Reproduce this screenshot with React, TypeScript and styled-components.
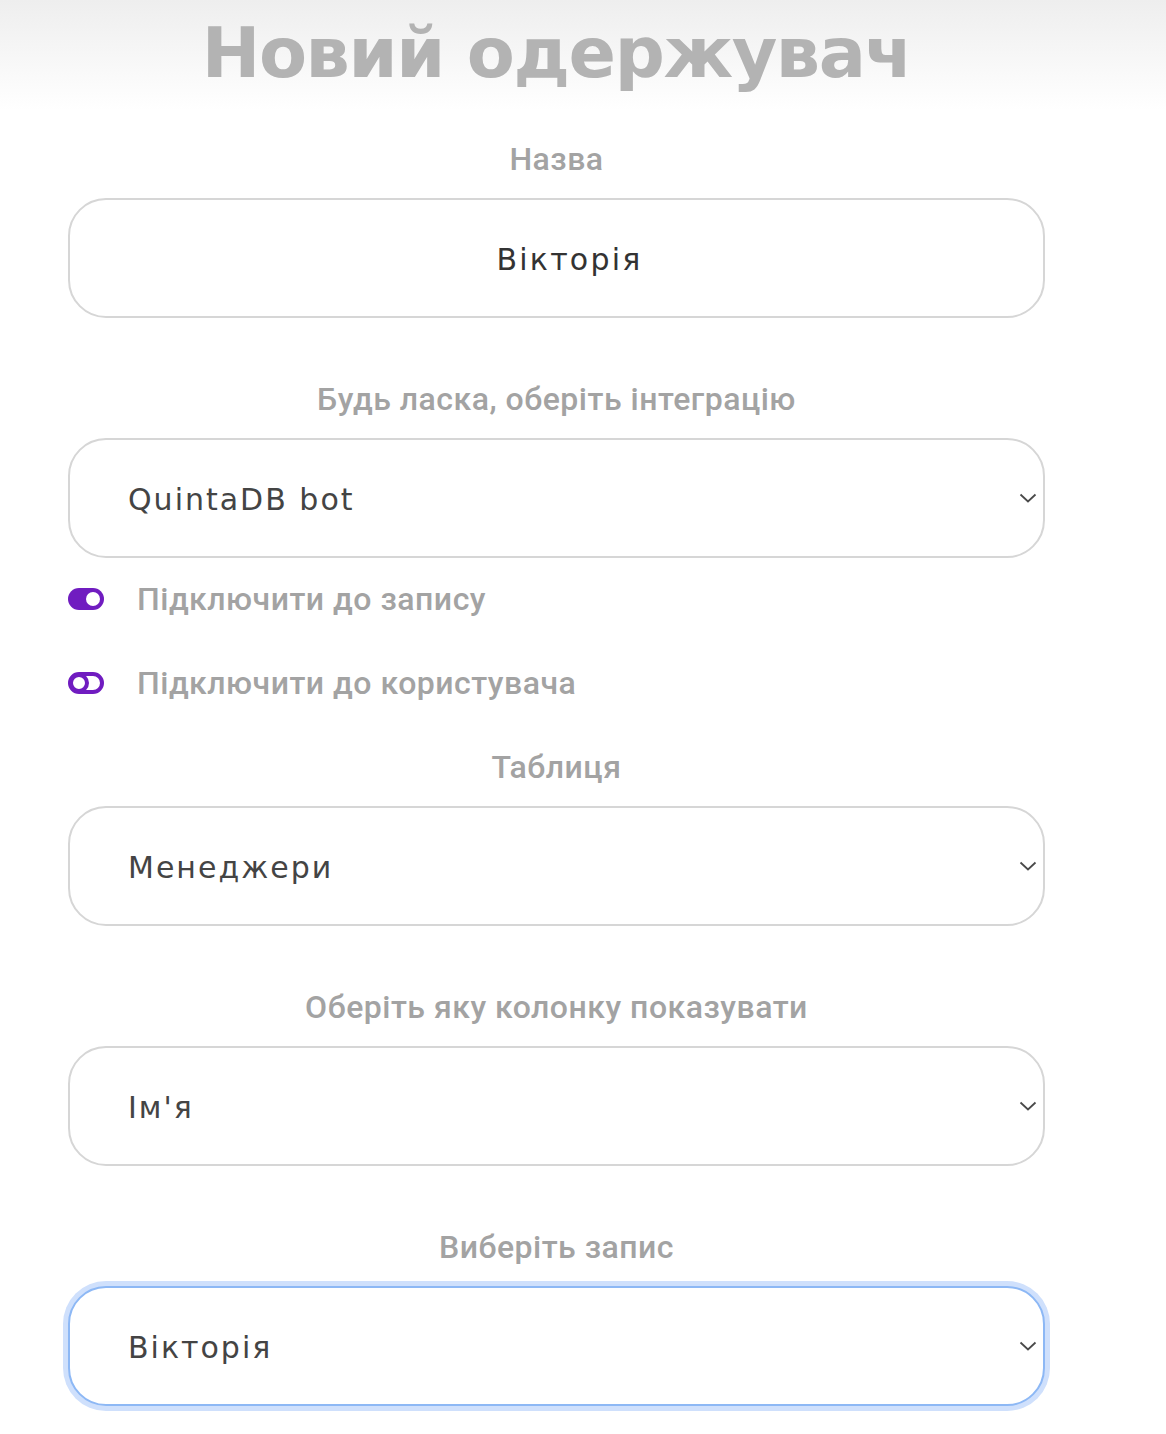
import React from "react";
import styled, { createGlobalStyle } from "styled-components";

const GlobalStyle = createGlobalStyle`
  html, body {
    margin: 0;
    padding: 0;
    background: #ffffff;
  }
  body {
    font-family: Roboto, "Noto Sans", sans-serif;
    background: linear-gradient(to bottom, #eeeeee 0px, #ffffff 110px) no-repeat;
  }
`;

const Page = styled.div`
  width: 1166px;
  min-height: 1434px;
  box-sizing: border-box;
  padding-left: 68px;
`;

const Column = styled.div`
  width: 977px;
  display: flex;
  flex-direction: column;
`;

const Title = styled.h1`
  margin: 0;
  height: 112px;
  line-height: 106px;
  text-align: center;
  font-family: "DejaVu Sans", Inter, sans-serif;
  font-weight: 700;
  font-size: 70px;
  letter-spacing: -1.4px;
  color: #b3b3b3;
`;

const Label = styled.label<{ $top?: number }>`
  display: block;
  margin-top: ${({ $top }) => $top ?? 0}px;
  height: 40px;
  line-height: 40px;
  text-align: center;
  font-family: Roboto, sans-serif;
  font-weight: 500;
  font-size: 32px;
  letter-spacing: 0.5px;
  color: #a3a3a3;
`;

const fieldBase = `
  box-sizing: border-box;
  width: 100%;
  height: 120px;
  border: 2px solid #d6d6d6;
  border-radius: 38px;
  background: #ffffff;
  font-family: "DejaVu Sans", "Noto Sans", sans-serif;
  font-size: 30px;
  outline: none;
`;

const TextInput = styled.input`
  ${fieldBase}
  margin-top: 19px;
  padding: 2px 30px 0 56px;
  text-align: center;
  color: #333333;
  font-weight: 400;
  letter-spacing: 2.2px;
`;

const SelectWrap = styled.div`
  position: relative;
  margin-top: 19px;
`;

const Select = styled.select<{ $focused?: boolean }>`
  ${fieldBase}
  appearance: none;
  -webkit-appearance: none;
  padding: 2px 80px 0 58px;
  color: #444444;
  font-weight: 400;
  letter-spacing: 2px;
  border-color: ${({ $focused }) => ($focused ? "#8db8f5" : "#d6d6d6")};
  box-shadow: ${({ $focused }) => ($focused ? "0 0 0 5px #cfe0fc" : "none")};
`;

const Chevron = styled.svg`
  position: absolute;
  right: 8px;
  top: 50%;
  width: 18px;
  height: 10px;
  margin-top: -5px;
  pointer-events: none;
`;

const ToggleRow = styled.div<{ $top: number }>`
  display: flex;
  align-items: center;
  gap: 33px;
  height: 40px;
  margin-top: ${({ $top }) => $top}px;
`;

const ToggleText = styled.span`
  font-family: Roboto, sans-serif;
  font-weight: 500;
  font-size: 32px;
  letter-spacing: 0.5px;
  color: #a3a3a3;
`;

const Toggle = ({ on }: { on: boolean }) => (
  <svg width="36" height="22" viewBox="0 0 36 22">
    {on ? (
      <>
        <rect x="0" y="0" width="36" height="22" rx="11" fill="#701cc0" />
        <circle cx="25" cy="11" r="7" fill="#ffffff" />
      </>
    ) : (
      <>
        <rect x="2" y="2" width="32" height="18" rx="9" fill="none" stroke="#701cc0" strokeWidth="4" />
        <circle cx="11" cy="11" r="8" fill="none" stroke="#701cc0" strokeWidth="4" />
      </>
    )}
  </svg>
);

const SelectField = ({ value, focused }: { value: string; focused?: boolean }) => (
  <SelectWrap>
    <Select $focused={focused} defaultValue={value}>
      <option>{value}</option>
    </Select>
    <Chevron viewBox="0 0 18 10">
      <path d="M1.5 1.5 L9 8.5 L16.5 1.5" fill="none" stroke="#4a4a4a" strokeWidth="1.8" />
    </Chevron>
  </SelectWrap>
);

export default function App() {
  return (
    <>
      <GlobalStyle />
      <Page>
        <Column>
          <Title>Новий одержувач</Title>
          <Label $top={27}>Назва</Label>
          <TextInput defaultValue="Вікторія" />

          <Label $top={61}>Будь ласка, оберіть інтеграцію</Label>
          <SelectField value="QuintaDB bot" />

          <ToggleRow $top={21}>
            <Toggle on />
            <ToggleText>Підключити до запису</ToggleText>
          </ToggleRow>
          <ToggleRow $top={44}>
            <Toggle on={false} />
            <ToggleText>Підключити до користувача</ToggleText>
          </ToggleRow>

          <Label $top={44}>Таблиця</Label>
          <SelectField value="Менеджери" />

          <Label $top={61}>Оберіть яку колонку показувати</Label>
          <SelectField value="Ім'я" />

          <Label $top={61}>Виберіть запис</Label>
          <SelectField value="Вікторія" focused />
        </Column>
      </Page>
    </>
  );
}
